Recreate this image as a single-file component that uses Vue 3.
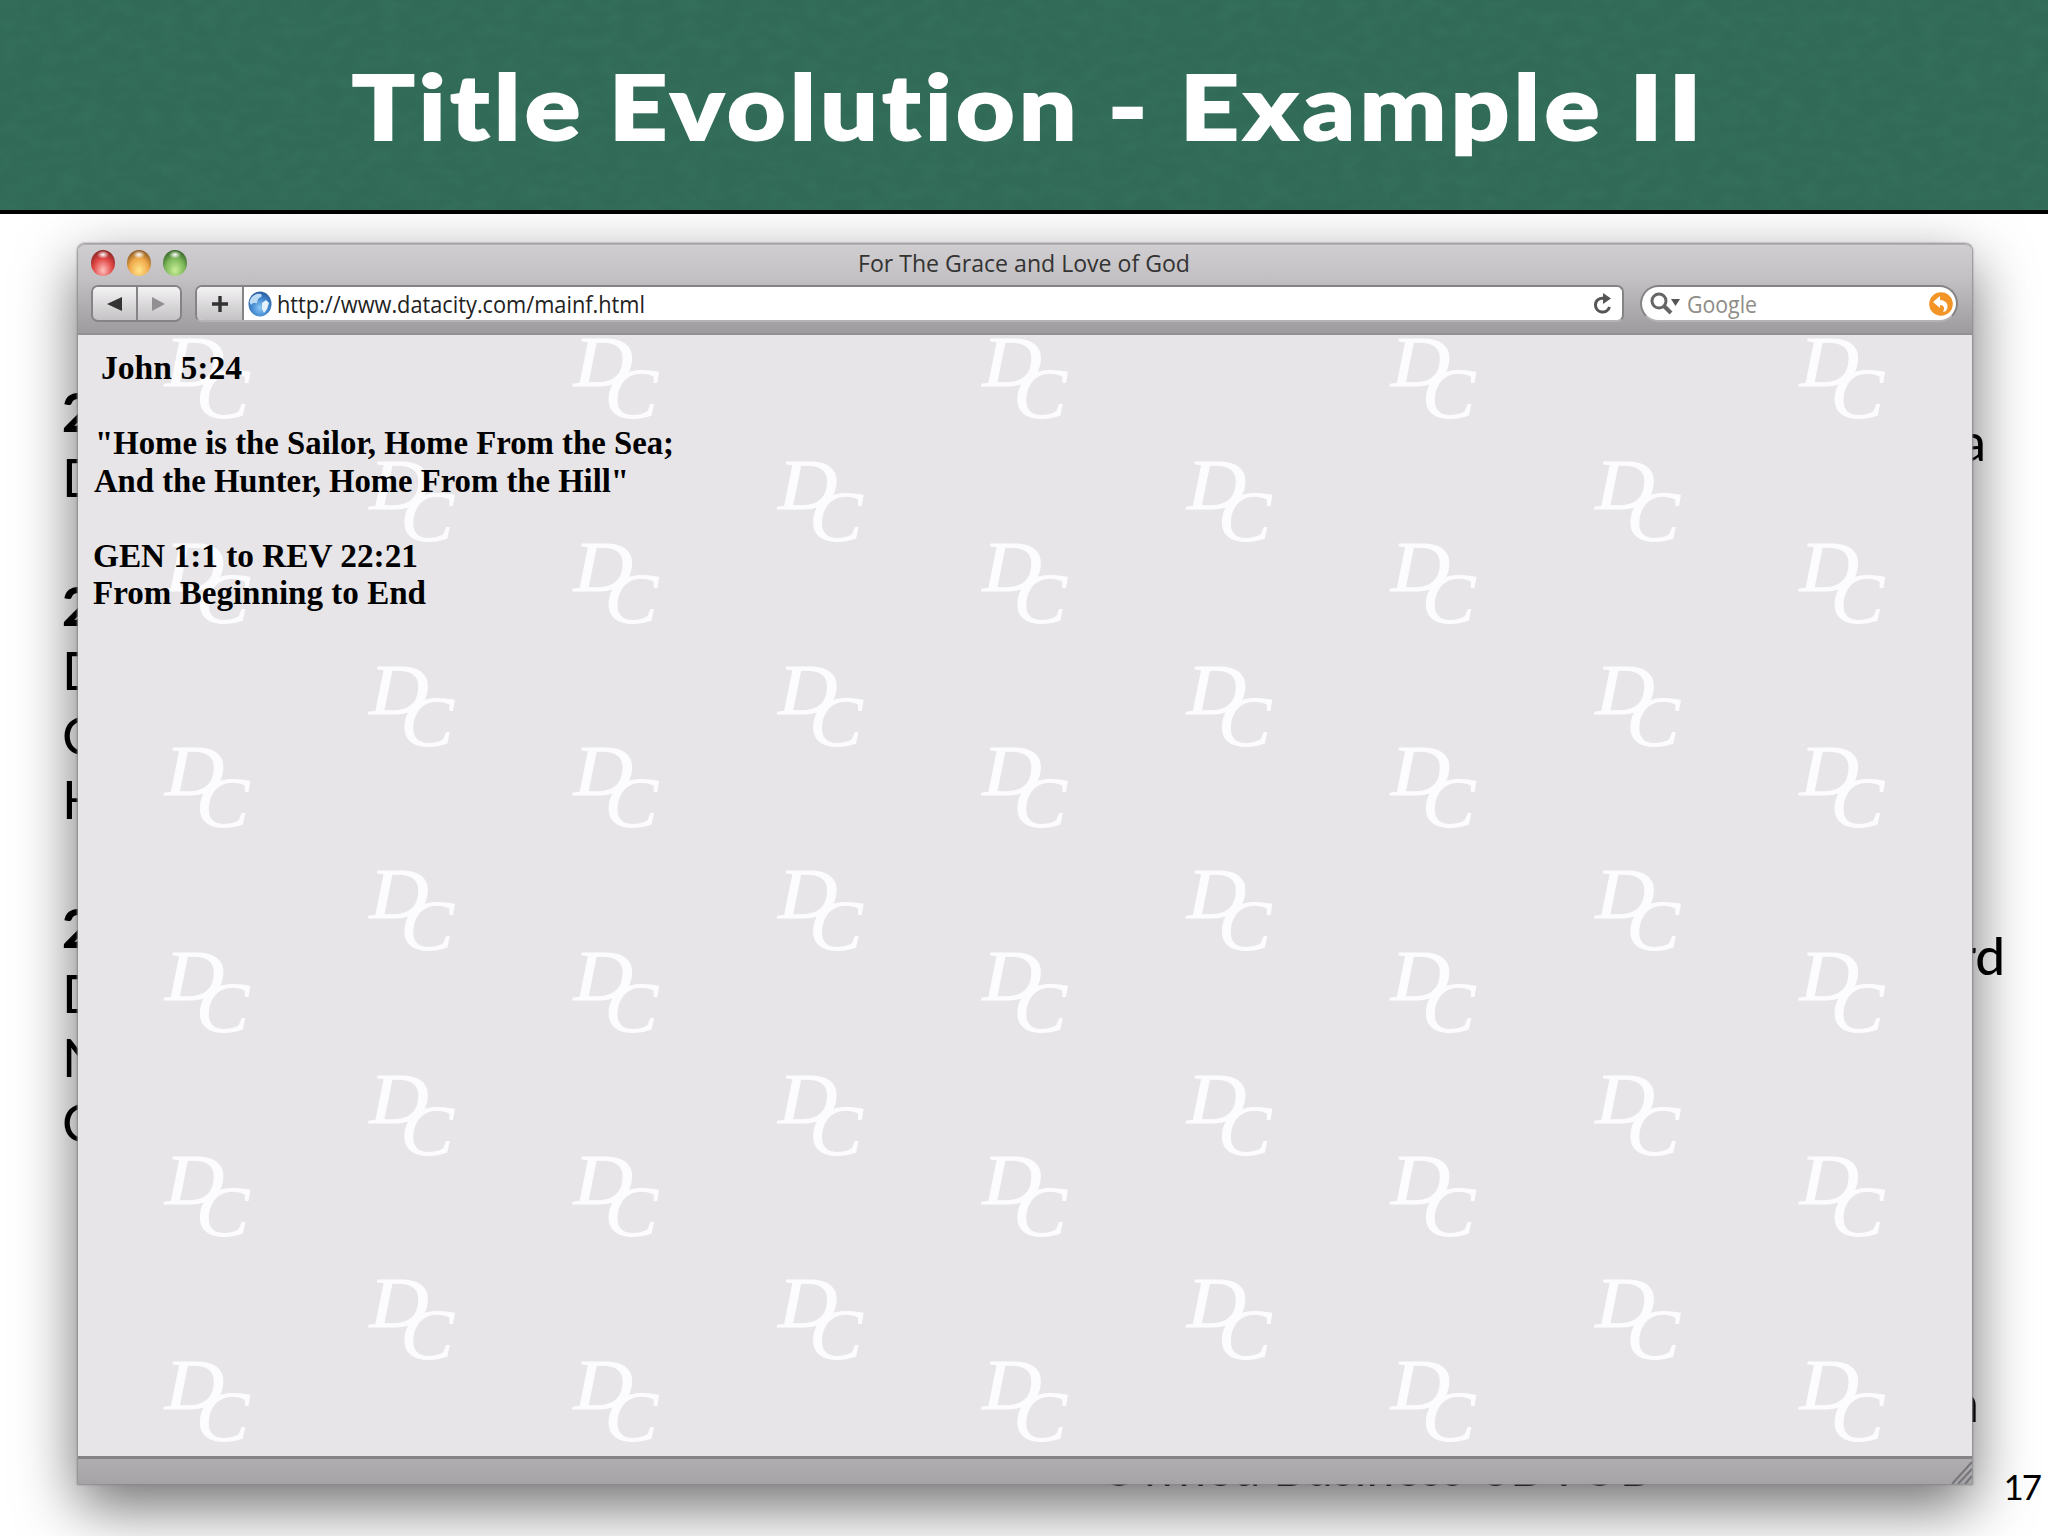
<template>
  <div class="slide">
    <header class="banner">
      <svg class="grain" width="100%" height="100%">
        <filter id="grain">
          <feTurbulence type="fractalNoise" baseFrequency="0.05 0.08" numOctaves="4" />
          <feColorMatrix values="0 0 0 0 0.1  0 0 0 0 0.32  0 0 0 0 0.24  0.9 0 0 0 -0.3" />
        </filter>
        <rect width="100%" height="100%" filter="url(#grain)" />
      </svg>
      <svg class="banner-title" width="1360" height="130">
        <text v-for="w in title" :key="w.text" :x="w.x" y="86" :textLength="w.w" lengthAdjust="spacingAndGlyphs">{{ w.text }}</text>
      </svg>
    </header>

    <main class="body">
      <div class="notes">
        <p v-for="(line, i) in notes" :key="i" :class="{ year: line === '2' }">{{ line }}</p>
      </div>
      <span class="note-end end-a">a</span>
      <span class="note-end end-rd">rd</span>
      <span class="note-end end-n">n</span>
      <svg class="end-owned" width="560" height="64">
        <text x="0" y="48" textLength="365" lengthAdjust="spacingAndGlyphs">Owned Business</text>
        <text x="384" y="48" textLength="169" lengthAdjust="spacingAndGlyphs">SDVOB</text>
      </svg>
      <span class="page-number">17</span>

      <section class="window">
        <div class="titlebar">
          <div class="lights">
            <i class="light red"></i>
            <i class="light amber"></i>
            <i class="light green"></i>
          </div>
          <svg class="window-title" width="332" height="30">
            <text x="-1" y="21" textLength="332" lengthAdjust="spacingAndGlyphs">For The Grace and Love of God</text>
          </svg>
        </div>

        <div class="toolbar">
          <div class="nav">
            <button><svg width="16" height="16"><path d="M16 1V15L1 8Z" fill="#333" /></svg></button>
            <button><svg width="14" height="16"><path d="M0 1V15L13 8Z" fill="#929092" /></svg></button>
          </div>
          <div class="address">
            <button class="add"><svg width="18" height="18"><path d="M9 1V17M1 9H17" stroke="#333" stroke-width="3.4" /></svg></button>
            <svg class="globe" width="24" height="26" viewBox="0 0 24 26">
              <defs>
                <radialGradient id="globe" cx=".5" cy=".65" r=".6">
                  <stop offset="0" stop-color="#8cc8f4" />
                  <stop offset=".6" stop-color="#4289d0" />
                  <stop offset="1" stop-color="#2d62a5" />
                </radialGradient>
              </defs>
              <ellipse cx="12" cy="13" rx="11.500" ry="12.500" fill="url(#globe)" />
              <path d="M3 7Q7 2 13 3L14 5L10 8L9 12L5 12L3 14L1.500 11Z" fill="#bddcf3" />
              <path d="M14 12L18 9L21 12L19 18L16 22L14 18Z" fill="#e3f2fb" />
            </svg>
            <svg class="url" width="370" height="34">
              <text x="0" y="26" textLength="368" lengthAdjust="spacingAndGlyphs">http://www.datacity.com/mainf.html</text>
            </svg>
            <svg class="reload" width="20" height="24" viewBox="0 0 20 24">
              <path d="M12 6.500C6 5 2.500 9 2.500 13C2.500 21 14 23 16.500 15" fill="none" stroke="#555" stroke-width="3" />
              <path d="M10 1L18 6.500L10 12Z" fill="#555" />
            </svg>
          </div>
          <div class="search">
            <svg width="30" height="24" viewBox="0 0 30 24">
              <circle cx="9" cy="9" r="7" fill="none" stroke="#666" stroke-width="3" />
              <path d="M14 14L21 21" stroke="#666" stroke-width="4" />
              <path d="M21 7H30L25.500 14Z" fill="#555" />
            </svg>
            <svg class="placeholder" width="72" height="34">
              <text x="-1" y="26" textLength="70" lengthAdjust="spacingAndGlyphs">Google</text>
            </svg>
            <svg class="snapback" width="24" height="24" viewBox="0 0 24 24">
              <circle cx="12" cy="12" r="11.800" fill="#f39427" />
              <path d="M4 10L11 4V8C17 8 21 13 17 19L14 20C16 16 15 13 11 13V16Z" fill="#fff" />
            </svg>
          </div>
        </div>

        <div class="page">
          <svg class="watermark" width="100%" height="100%">
            <g v-for="m in marks" :key="`${m.x}-${m.y}`" :transform="`translate(${m.x} ${m.y})`">
              <text x="0" y="48" textLength="59" lengthAdjust="spacingAndGlyphs">D</text>
              <text x="31" y="80" textLength="53" lengthAdjust="spacingAndGlyphs">C</text>
            </g>
          </svg>
          <svg class="verse" width="620" height="300">
            <text v-for="v in verse" :key="v.text" :x="v.x" :y="v.y" :textLength="v.w" lengthAdjust="spacingAndGlyphs">{{ v.text }}</text>
          </svg>
        </div>

        <footer class="statusbar">
          <svg width="22" height="24"><path d="M2 24L22 2M8 24L22 9M15 24L22 16" stroke="#77757a" stroke-width="2" /></svg>
        </footer>
      </section>
    </main>
  </div>
</template>

<script setup>
const title = [
  { text: 'Title', x: 8, w: 233 },
  { text: 'Evolution', x: 265, w: 472 },
  { text: '-', x: 764, w: 44 },
  { text: 'Example', x: 836, w: 424 },
  { text: 'II', x: 1285, w: 78 },
];

const notes = ['2', 'D', '', '2', 'D', 'C', 'H', '', '2', 'D', 'N', 'C'];

// background logo tile: one mark in the corner, one in the middle
const marks = [];
for (let row = 0; row < 6; row++) {
  for (let col = 0; col < 5; col++) {
    marks.push({ x: 87 + col * 408.7, y: 3 + row * 204.5 });
    if (row < 5 && col < 4) {
      marks.push({ x: 291.5 + col * 408.7, y: 126 + row * 204.5 });
    }
  }
}

const verse = [
  { text: 'John 5:24', x: 23, y: 44, w: 141 },
  { text: '"Home is the Sailor, Home From the Sea;', x: 17, y: 119, w: 579 },
  { text: 'And the Hunter, Home From the Hill"', x: 16, y: 156.5, w: 535 },
  { text: 'GEN 1:1 to REV 22:21', x: 15, y: 231.5, w: 325 },
  { text: 'From Beginning to End', x: 15, y: 269, w: 333 },
];
</script>

<style>
body {
  margin: 0;
}
</style>

<style scoped>
.slide {
  width: 2048px;
  height: 1536px;
  display: flex;
  flex-direction: column;
  overflow: hidden;
  background: #fff;
  font-family: Lato, sans-serif;
  color: #000;
}

.banner {
  position: relative;
  box-sizing: border-box;
  height: 214px;
  flex-shrink: 0;
  display: flex;
  justify-content: center;
  background: #316b58;
  border-bottom: 4px solid #000;
}

.grain {
  position: absolute;
  inset: 0;
  opacity: 0.2;
}

.banner-title {
  position: relative;
  margin-top: 54px;
  overflow: visible;
  font-size: 90px;
  font-weight: 900;
  letter-spacing: 4px;
  font-variant-ligatures: none;
  fill: #fff;
  stroke: #fff;
  stroke-width: 2;
}

.body {
  position: relative;
  flex: 1;
  overflow: hidden;
  padding: 30px 76px 0 78px;
}

/* slide text showing from behind the window */
.notes {
  position: absolute;
  left: 62px;
  top: 166px;
}

.notes p {
  margin: 0;
  height: 64.5px;
  font-size: 53px;
  line-height: 64.5px;
}

.notes .year {
  font-weight: 900;
}

.note-end {
  position: absolute;
  font-size: 53px;
  line-height: 64px;
  white-space: nowrap;
}

.end-a {
  right: 62px;
  top: 195px;
}

.end-rd {
  right: 43px;
  top: 709px;
  font-weight: 500;
}

.end-n {
  right: 69px;
  top: 1156px;
}

.end-owned {
  position: absolute;
  left: 1099px;
  top: 1224px;
  font-size: 53px;
}

.page-number {
  position: absolute;
  right: 8px;
  top: 1251px;
  font-size: 35px;
  line-height: 42px;
  letter-spacing: -2px;
}

.window {
  position: relative;
  box-sizing: border-box;
  height: 1240px;
  display: flex;
  flex-direction: column;
  border-radius: 7px 7px 0 0;
  background: #e7e5e8;
  box-shadow: 0 0 2px 1px #8a888a, 0 22px 60px rgba(0, 0, 0, 0.58);
}

.titlebar {
  position: relative;
  box-sizing: border-box;
  height: 38px;
  display: flex;
  justify-content: center;
  border-radius: 7px 7px 0 0;
  background: linear-gradient(#d0ced0, #c1bfc1);
  border-top: 1px solid #b4b2b4;
}

.lights {
  position: absolute;
  left: 13px;
  top: 5px;
  display: flex;
  gap: 12px;
}

.light {
  width: 24px;
  height: 26px;
  border-radius: 50%;
  box-sizing: border-box;
}

.red {
  background: radial-gradient(6px 4px at 50% 18%, #fff, transparent), radial-gradient(16px 20px at 50% 78%, #ffc0bc, #e04644 60%, #8c2725);
}

.amber {
  background: radial-gradient(6px 4px at 50% 18%, #fff, transparent), radial-gradient(16px 20px at 50% 78%, #ffe68a, #efa849 60%, #8f5b24);
}

.green {
  background: radial-gradient(6px 4px at 50% 18%, #fff, transparent), radial-gradient(16px 20px at 50% 78%, #c8ee98, #7db85a 60%, #39682b);
}

.window-title,
.url,
.placeholder {
  overflow: visible;
  font-family: "Open Sans", sans-serif;
  font-size: 24px;
  fill: #333;
}

.window-title {
  margin-top: 6px;
}

.toolbar {
  box-sizing: border-box;
  height: 53px;
  display: flex;
  align-items: flex-start;
  padding: 3px 14px 0 13px;
  background: linear-gradient(#c0bec0, #9d9b9d);
  border-bottom: 2px solid #939193;
}

button {
  box-sizing: border-box;
  padding: 0;
  border: 0;
  display: flex;
  align-items: center;
  justify-content: center;
  background: linear-gradient(#f4f3f4, #c4c2c4);
}

.nav,
.address,
.search {
  box-sizing: border-box;
  height: 37px;
  display: flex;
  align-items: center;
  border: 2px solid #858385;
  overflow: hidden;
}

.address,
.search {
  border-bottom-color: #b5b3b5;
}

.nav {
  width: 91px;
  border-radius: 7px;
}

.nav button {
  flex: 1;
  height: 100%;
}

.nav button + button {
  border-left: 2px solid #858385;
}

.address {
  width: 1429px;
  margin-left: 13px;
  border-radius: 7px;
  background: #fff;
}

.add {
  width: 47px;
  height: 100%;
  border-right: 2px solid #858385;
}

.globe {
  margin-left: 4px;
}

.url {
  margin-left: 5px;
  fill: #222;
}

.reload {
  margin-left: auto;
  margin-right: 9px;
}

.search {
  flex: 1;
  margin-left: 16px;
  padding: 0 3px 0 8px;
  border-radius: 19px;
  background: #fff;
}

.placeholder {
  margin-left: 8px;
  fill: #8f8d88;
}

.snapback {
  margin-left: auto;
}

.page {
  position: relative;
  flex: 1;
  overflow: hidden;
}

.watermark {
  position: absolute;
  inset: 0;
  font: italic 72px "Liberation Serif", serif;
  fill: #fcfbfd;
  stroke: #fcfbfd;
  stroke-width: 1;
}

.verse {
  position: relative;
  display: block;
  font: bold 33px "Liberation Serif", serif;
}

.statusbar {
  box-sizing: border-box;
  height: 28px;
  display: flex;
  justify-content: flex-end;
  align-items: flex-end;
  background: linear-gradient(#b0aeb0, #a5a3a5);
  border-top: 3px solid #858385;
}
</style>
